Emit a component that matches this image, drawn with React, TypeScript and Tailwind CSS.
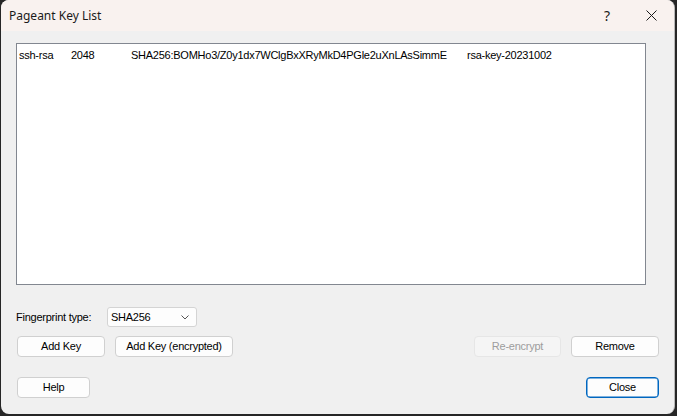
import React from 'react';

const sans = { fontFamily: '"Liberation Sans", Arial, sans-serif' };

const Button: React.FC<{ label: string; w: string; disabled?: boolean; primary?: boolean }> = ({ label, w, disabled, primary }) => {
  const base = 'h-[21px] flex items-center justify-center rounded-[4px] text-[11px] leading-none tracking-[-0.25px]';
  const look = disabled
    ? 'bg-[#f5f5f5] border border-[#e6e6e6] text-[#9d9d9d]'
    : primary
    ? 'bg-[#fdfdfd] border border-[#0067c0] shadow-[inset_0_0_0_0.5px_#0067c0] text-black'
    : 'bg-[#fdfdfd] border border-[#d0d0d0] text-black';
  return <div className={`${base} ${look} ${w}`}>{label}</div>;
};

export default function App() {
  return (
    <div className="w-[677px] h-[416px] bg-[#262626] overflow-hidden" style={sans}>
      <div className="ml-[1px] w-[674px] h-[414px] rounded-lg bg-[#f0f0f0] border-r border-[#b8b8b8] overflow-hidden flex flex-col">
        <div className="h-[31px] bg-[#f9f2ef] flex items-center pl-[8px] pr-[16px]">
          <span className="text-[12px] text-[#1a1a1a]" style={{ fontFamily: '"Noto Sans", "Open Sans", sans-serif' }}>
            Pageant Key List
          </span>
          <div className="flex-1" />
          <span className="text-[14px] text-[#1a1a1a] mr-[36px]" style={{ fontFamily: '"Noto Sans", sans-serif' }}>?</span>
          <svg width="11" height="11" viewBox="0 0 11 11" className="mr-[1px]">
            <path d="M0.5 0.5 L10.5 10.5 M10.5 0.5 L0.5 10.5" stroke="#1a1a1a" strokeWidth="1" />
          </svg>
        </div>
        <div className="flex-1 flex flex-col pl-[15px] pt-[12px] pr-[15px] tracking-[-0.25px]">
          <div className="w-[630px] h-[242px] bg-white border border-[#828790] pt-[5px] pl-[2px]">
            <div className="flex text-[11px] text-black leading-[13px]">
              <span className="w-[52px]">ssh-rsa</span>
              <span className="w-[60px]">2048</span>
              <span className="w-[336px]">SHA256:BOMHo3/Z0y1dx7WClgBxXRyMkD4PGle2uXnLAsSimmE</span>
              <span>rsa-key-20231002</span>
            </div>
          </div>
          <div className="mt-[22px] flex items-center h-[20px]">
            <span className="text-[11px] text-black w-[91px]">Fingerprint type:</span>
            <div className="w-[90px] h-[20px] bg-[#fdfdfd] border border-[#d4d4d4] rounded-[3px] flex items-center pl-[3px] pr-[7px]">
              <span className="text-[11px] text-black flex-1">SHA256</span>
              <svg width="8" height="5" viewBox="0 0 8 5">
                <path d="M0.5 0.5 L4 4 L7.5 0.5" stroke="#555" strokeWidth="1" fill="none" />
              </svg>
            </div>
          </div>
          <div className="mt-[9px] flex items-center">
            <div className="ml-[1px]">
              <Button label="Add Key" w="w-[88px]" />
            </div>
            <div className="ml-[10px]">
              <Button label="Add Key (encrypted)" w="w-[118px]" />
            </div>
            <div className="flex-1" />
            <Button label="Re-encrypt" w="w-[87px]" disabled />
            <div className="ml-[10px]">
              <Button label="Remove" w="w-[88px]" />
            </div>
          </div>
          <div className="mt-[20px] flex items-center">
            <div className="ml-[1px]">
              <Button label="Help" w="w-[73px]" />
            </div>
            <div className="flex-1" />
            <Button label="Close" w="w-[73px]" primary />
          </div>
        </div>
      </div>
    </div>
  );
}
